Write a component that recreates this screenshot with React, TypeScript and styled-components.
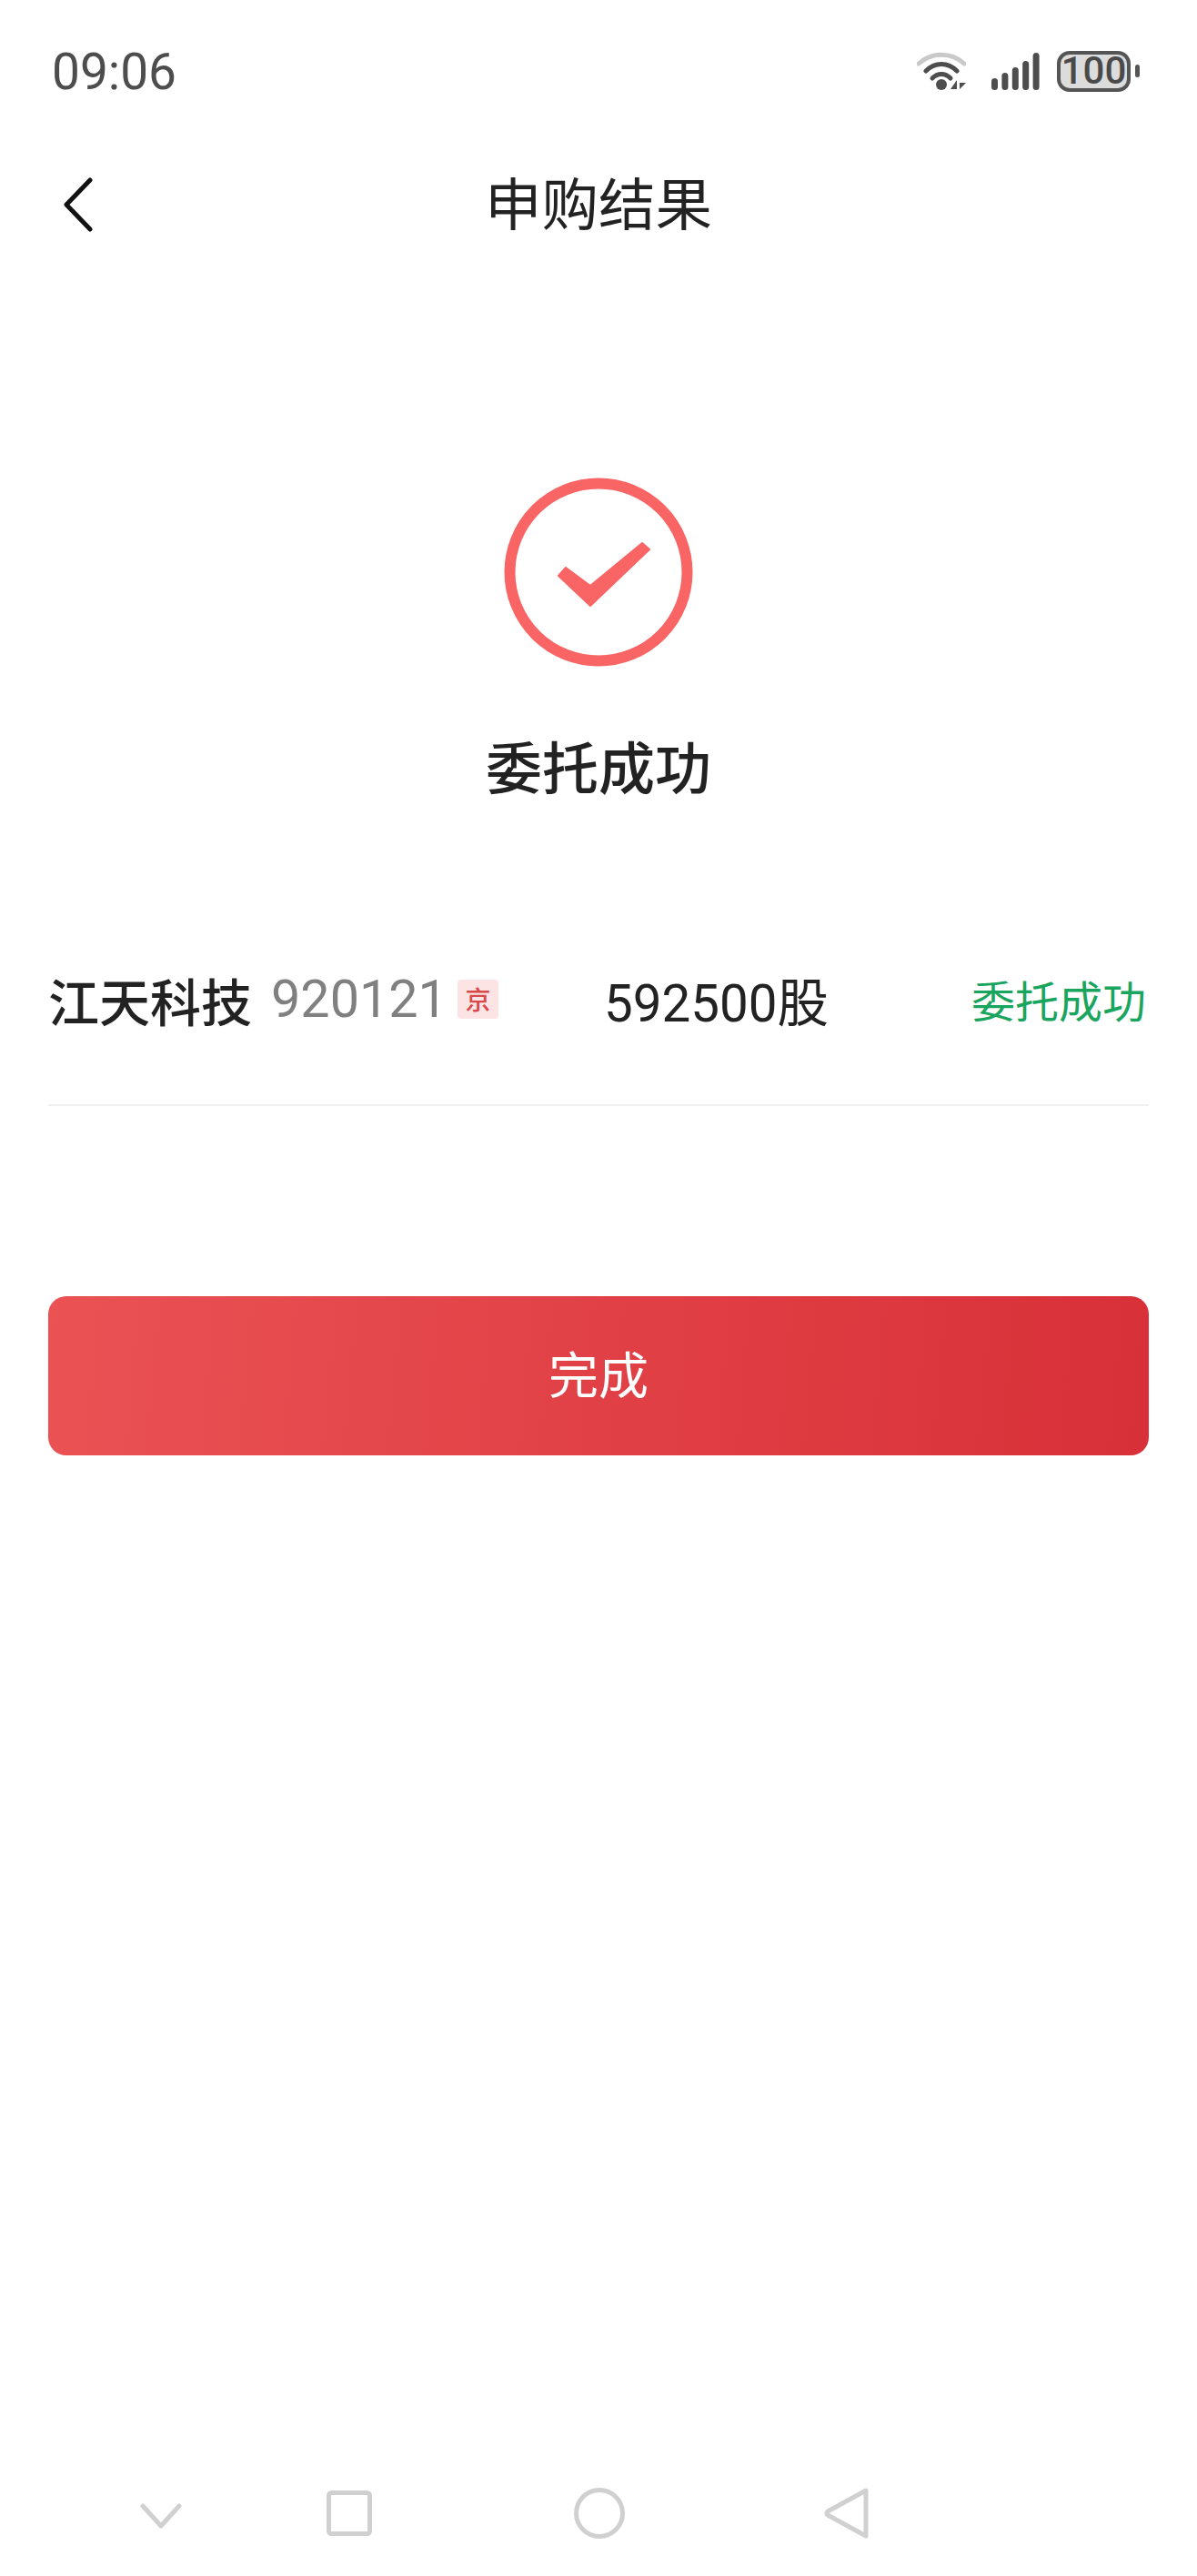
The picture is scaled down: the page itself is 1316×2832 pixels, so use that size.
import React from "react";
import styled, { createGlobalStyle } from "styled-components";

const GlobalStyle = createGlobalStyle`
  html, body {
    margin: 0;
    padding: 0;
    background: #fff;
  }
  body {
    font-family: Roboto, "Noto Sans CJK SC", sans-serif;
  }
`;

const Page = styled.div`
  width: 1316px;
  height: 2832px;
  display: flex;
  flex-direction: column;
  overflow: hidden;
  background: #fff;
`;

const StatusBar = styled.div`
  height: 157px;
  box-sizing: border-box;
  padding: 55px 63px 0 57px;
  display: flex;
  justify-content: space-between;
  align-items: flex-start;
`;

const Clock = styled.span`
  font-size: 55px;
  line-height: 48px;
  color: #4d4d4d;
`;

const StatusIcons = styled.div`
  display: flex;
  align-items: center;
  height: 46px;
`;

const Battery = styled.div`
  width: 81px;
  height: 45px;
  box-sizing: border-box;
  margin-left: 19px;
  border: 4px solid #555;
  border-radius: 14px;
  background: #dcdcdc;
  display: flex;
  align-items: center;
  justify-content: center;
  font-size: 42px;
  font-weight: 500;
  line-height: 1;
  color: #4a4a4a;
`;

const BatteryCap = styled.div`
  width: 5px;
  height: 14px;
  margin-left: 5px;
  border-radius: 3px;
  background: #555;
`;

const NavBar = styled.div`
  height: 136px;
  box-sizing: border-box;
  padding-left: 68px;
  position: relative;
  display: flex;
  align-items: center;
`;

const NavTitle = styled.h1`
  position: absolute;
  left: 0;
  right: 0;
  top: 30px;
  margin: 0;
  text-align: center;
  font-size: 62.5px;
  line-height: 80px;
  font-weight: 400;
  color: #222;
`;

const Result = styled.section`
  margin-top: 232px;
  display: flex;
  flex-direction: column;
  align-items: center;
  gap: 74px;
`;

const ResultText = styled.div`
  font-size: 62px;
  line-height: 80px;
  font-weight: 500;
  color: #222;
`;

const OrderRow = styled.div`
  margin: 141px 53px 0;
  height: 188px;
  box-sizing: border-box;
  padding: 0 3px 46px 0;
  display: flex;
  align-items: center;
  border-bottom: 2px solid #f0f0f0;
`;

const StockName = styled.span`
  font-size: 56px;
  font-weight: 500;
  color: #222;
`;

const StockCode = styled.span`
  margin-left: 21px;
  font-size: 57.5px;
  color: #808080;
`;

const MarketBadge = styled.span`
  margin-left: 11px;
  width: 45px;
  height: 43px;
  border-radius: 4px;
  background: #fde4e4;
  color: #d9484a;
  font-size: 28px;
  font-weight: 500;
  display: flex;
  align-items: center;
  justify-content: center;
`;

const Quantity = styled.span`
  margin-left: 116px;
  font-size: 56.5px;
  color: #222;
`;

const OrderStatus = styled.span`
  margin-left: auto;
  font-size: 48px;
  color: #1aa55f;
`;

const DoneButton = styled.button`
  margin: 209px 53px 0;
  height: 175px;
  padding: 0 0 10px;
  border: 0;
  border-radius: 20px;
  background: linear-gradient(95deg, #ea5254 0%, #d83038 100%);
  color: #fff;
  font-family: inherit;
  font-size: 55px;
`;

const SystemNav = styled.div`
  margin-top: auto;
  height: 94px;
  position: relative;
`;

const SystemKey = styled.svg<{ $x: number; $y: number }>`
  position: absolute;
  left: ${({ $x }) => $x}px;
  top: ${({ $y }) => $y}px;
`;

const WifiIcon = () => (
  <svg width="54" height="44" viewBox="0 0 54 44">
    <path d="M2 14 C16 1 38 1 52 14" fill="none" stroke="#c9c9c9" strokeWidth="5" strokeLinecap="round" />
    <path d="M10 22 C20 12 34 12 44 22" fill="none" stroke="#4d4d4d" strokeWidth="5" strokeLinecap="round" />
    <path d="M17 30 C23 24 31 24 37 30" fill="none" stroke="#4d4d4d" strokeWidth="5" strokeLinecap="round" />
    <circle cx="27" cy="37" r="6" fill="#4d4d4d" />
    <path d="M44 32 V42 H37 Z M47 32 V42 L54 35 H47 Z" fill="#4d4d4d" />
  </svg>
);

const SignalIcon = () => (
  <svg width="54" height="44" viewBox="0 0 54 44" style={{ marginLeft: 27 }}>
    {[30, 24, 18, 11, 2].map((top, i) => (
      <rect key={i} x={1 + i * 11.4} y={top} width="7" height={43 - top} rx="3.5" fill="#4d4d4d" />
    ))}
  </svg>
);

const App: React.FC = () => {
  return (
    <Page>
      <GlobalStyle />
      <StatusBar>
        <Clock>09:06</Clock>
        <StatusIcons>
          <WifiIcon />
          <SignalIcon />
          <Battery>100</Battery>
          <BatteryCap />
        </StatusIcons>
      </StatusBar>

      <NavBar>
        <svg width="36" height="60" viewBox="0 0 36 60">
          <path d="M31 3 L5 30 L31 57" fill="none" stroke="#111" strokeWidth="5" strokeLinecap="round" strokeLinejoin="round" />
        </svg>
        <NavTitle>申购结果</NavTitle>
      </NavBar>

      <Result>
        <svg width="208" height="208" viewBox="0 0 208 208">
          <circle cx="104" cy="104" r="97.5" fill="none" stroke="#f96464" strokeWidth="12" />
          <path
            d="M60 108 L68 99 L95 119 L152 72 L160 79 L95 141 Z"
            fill="#f96464"
            stroke="#f96464"
            strokeWidth="2"
            strokeLinejoin="round"
          />
        </svg>
        <ResultText>委托成功</ResultText>
      </Result>

      <OrderRow>
        <StockName>江天科技</StockName>
        <StockCode>920121</StockCode>
        <MarketBadge>京</MarketBadge>
        <Quantity>592500股</Quantity>
        <OrderStatus>委托成功</OrderStatus>
      </OrderRow>

      <DoneButton>完成</DoneButton>

      <SystemNav>
        <SystemKey $x={154} $y={13} width="46" height="30" viewBox="0 0 46 30">
          <path d="M3 4 L23 26 L43 4" fill="none" stroke="#d0d0d0" strokeWidth="5" strokeLinecap="round" strokeLinejoin="round" />
        </SystemKey>
        <SystemKey $x={359} $y={0} width="50" height="50" viewBox="0 0 50 50">
          <rect x="2.5" y="2.5" width="45" height="45" rx="3" fill="none" stroke="#d0d0d0" strokeWidth="5" />
        </SystemKey>
        <SystemKey $x={631} $y={-3} width="56" height="56" viewBox="0 0 56 56">
          <circle cx="28" cy="28" r="25.5" fill="none" stroke="#d0d0d0" strokeWidth="5" />
        </SystemKey>
        <SystemKey $x={906} $y={-3} width="50" height="56" viewBox="0 0 50 56">
          <path d="M46 3 V53 L4 30 Q2 28 4 26 Z" fill="none" stroke="#d0d0d0" strokeWidth="5" strokeLinejoin="round" />
        </SystemKey>
      </SystemNav>
    </Page>
  );
};

export default App;
